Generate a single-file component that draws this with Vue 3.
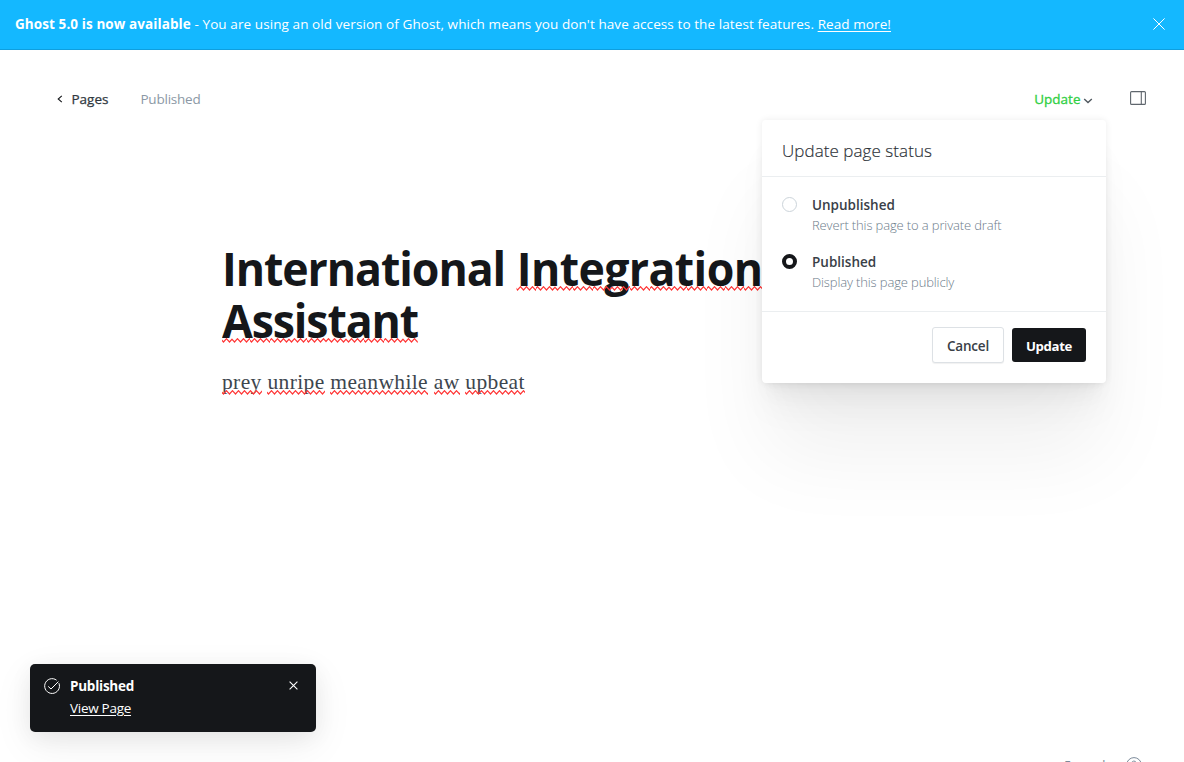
<script setup>
const words = ['prey', 'unripe', 'meanwhile', 'aw', 'upbeat']
</script>

<template>
  <div class="app">
    <header class="banner">
      <p class="banner-text"><strong>Ghost 5.0 is now available</strong> - You are using an old version of Ghost, which means you don't have access to the latest features. <a class="more">Read more!</a></p>
      <svg class="banner-close" width="12" height="12" viewBox="0 0 12 12"><path d="M.4.4 11.6 11.6M11.6.4.4 11.6" /></svg>
    </header>

    <nav class="toolbar">
      <svg class="back" width="6" height="8" viewBox="0 0 6 8"><path d="M4.8.8 1.2 4l3.6 3.2" /></svg>
      <span class="pages">Pages</span>
      <span class="state">Published</span>
      <span class="update">Update</span>
      <svg class="chev" width="10" height="6" viewBox="0 0 10 6"><path d="M1.2 1 5 4.5 8.8 1" /></svg>
      <svg class="panel" width="16" height="14" viewBox="0 0 16 14"><rect x=".6" y=".6" width="14.8" height="12.8" rx="1" /><path d="M11.3.6v12.8" /></svg>
    </nav>

    <main class="editor">
      <h1><span class="w1">International</span> <span class="sq w2">Integration</span><br><span class="sq w3">Assistant</span></h1>
      <p class="body"><template v-for="w in words" :key="w"><span class="sq">{{ w }}</span>{{ ' ' }}</template></p>
    </main>

    <section class="menu">
      <h2>Update page status</h2>
      <div class="options">
        <div class="option">
          <i class="radio"></i>
          <div><b>Unpublished</b><small>Revert this page to a private draft</small></div>
        </div>
        <div class="option">
          <i class="radio on"></i>
          <div><b>Published</b><small>Display this page publicly</small></div>
        </div>
      </div>
      <footer>
        <button class="cancel">Cancel</button>
        <button class="primary">Update</button>
      </footer>
    </section>

    <aside class="toast">
      <svg class="check" width="16" height="16" viewBox="0 0 16 16"><path d="M14.9 5.2A7.4 7.4 0 1 1 12.6 2.2M4.2 8.4l2.8 2.6 7.4-7.4" /></svg>
      <div class="toast-text"><b>Published</b><a>View Page</a></div>
      <svg class="toast-close" width="9" height="9" viewBox="0 0 9 9"><path d="M.6.6 8.4 8.4M8.4.6.6 8.4" /></svg>
    </aside>

    <div class="status"><span>5 words</span><svg width="16" height="16" viewBox="0 0 16 16"><circle cx="8" cy="8" r="7.4" /><path d="M5.8 6.2a2.2 2.2 0 1 1 3.2 2c-.7.4-1 .7-1 1.4M8 11.4v1" /></svg></div>
  </div>
</template>

<style>
body { margin: 0; background: #fff; }
</style>

<style scoped>
.app { position: relative; width: 1184px; height: 762px; overflow: hidden; background: #fff; color: #15171a; font-family: "Segoe UI", "Open Sans", "Noto Sans", sans-serif; font-size: 13.5px; }
svg { display: block; fill: none; flex: none; }
p, h1, h2 { margin: 0; }
.banner { box-sizing: border-box; height: 50px; padding: 0 19px 2px 15px; display: flex; align-items: center; justify-content: space-between; background: #14b8ff; border-bottom: 1px solid #0f9fde; color: #fff; }
.banner-text { white-space: nowrap; letter-spacing: .09px; }
.banner-text strong { font-weight: 700; }
.more { text-decoration: underline; text-underline-offset: 2px; }
.banner-close { stroke: #fff; stroke-width: 1; }
.toolbar { height: 98px; box-sizing: border-box; padding: 0 38px 0 57px; display: flex; align-items: center; }
.back { stroke: #15171a; stroke-width: 1.1; }
.pages { margin-left: 8.5px; color: #303840; -webkit-text-stroke: .25px #303840; }
.state { margin-left: 32px; color: #8b98a5; letter-spacing: -.22px; }
.update { margin-left: auto; color: #30cf43; -webkit-text-stroke: .3px #30cf43; }
.chev { margin: 4px 37px 0 2.5px; stroke: #50585f; stroke-width: 1.4; }
.panel { stroke: #5f666d; stroke-width: 1.1; margin-top: -2px; }
.editor { padding: 94px 0 0 222px; }
h1 { width: 640px; font-size: 47px; line-height: 52px; font-weight: 700; white-space: nowrap; transform: scaleX(.95); transform-origin: 0 0; }
.w1 { letter-spacing: -1.13px; }
.w2 { letter-spacing: -.64px; }
.w3 { letter-spacing: -1.18px; }
.body { margin-top: 20px; font-family: Georgia, "Liberation Serif", serif; font-size: 21.5px; line-height: 32px; letter-spacing: .37px; color: #3d464e; }
.sq { position: relative; display: inline-block; }
.sq::after { content: ""; position: absolute; left: 0; right: 0; bottom: 3px; height: 5px; background: url("data:image/svg+xml,%3Csvg xmlns='http://www.w3.org/2000/svg' width='6' height='5'%3E%3Cpath d='M-1.5 .7 1.5 4 4.5 .7 7.5 4' fill='none' stroke='%23f33' stroke-width='1.2'/%3E%3C/svg%3E") repeat-x; }
.menu { position: absolute; left: 762px; top: 120px; width: 344px; height: 263px; background: #fff; border-radius: 4px; box-shadow: 0 0 7px rgba(0,0,0,.08), 0 5.1px 5.3px -5px rgba(0,0,0,.02), 0 9.5px 10px -5px rgba(0,0,0,.025), 0 17px 17.9px -5px rgba(0,0,0,.03), 0 31.8px 33.4px -5px rgba(0,0,0,.04), 0 76px 80px -5px rgba(0,0,0,.06); }
h2 { box-sizing: border-box; height: 57px; padding: 4px 20px 0; display: flex; align-items: center; border-bottom: 1px solid #ebeef0; font-weight: 300; font-size: 17px; letter-spacing: .06px; color: #2b3036; -webkit-text-stroke: .15px #2b3036; }
.options { height: 135px; box-sizing: border-box; padding: 18px 20px 0; border-bottom: 1px solid #ebeef0; }
.option { display: flex; height: 57px; }
.option b, .option small { display: block; width: max-content; line-height: 20px; }
.option b { font-weight: 600; color: #394047; }
.option small { font-size: 13px; font-weight: 300; letter-spacing: -.13px; color: #6c7b8a; }
.radio { box-sizing: border-box; width: 15px; height: 15px; margin: 2px 15px 0 0; border: 1px solid #ccd4da; border-radius: 50%; }
.radio.on { border: 4px solid #15171a; }
footer { display: flex; justify-content: flex-end; gap: 8px; padding: 15px 20px 0; }
button { box-sizing: border-box; font: inherit; font-weight: 600; padding: 0; display: flex; align-items: center; justify-content: center; border-radius: 3px; letter-spacing: -.2px; }
.cancel { width: 72px; height: 36px; padding-top: 1px; background: #fff; border: 1px solid #dde1e5; color: #394047; box-shadow: 0 1px 1px rgba(0,0,0,.06); }
.primary { width: 74px; height: 34px; margin-top: 1px; padding-top: 2px; border: 0; background: #15171a; color: #fff; font-weight: 700; font-size: 13.2px; letter-spacing: -.35px; }
.toast { position: absolute; left: 30px; top: 664px; box-sizing: border-box; width: 286px; height: 68px; padding: 11px 18px 0 14px; display: flex; background: #15171a; color: #fff; border-radius: 5px; box-shadow: 0 0 1px rgba(0,0,0,.05), 0 5px 22px rgba(0,0,0,.06), 0 12px 40px rgba(0,0,0,.07); }
.check { stroke: #fff; stroke-width: 1; margin: 3px 10px 0 0; }
.toast-text b, .toast-text a { display: block; width: max-content; line-height: 22px; }
.toast-text b { font-weight: 700; letter-spacing: -.25px; }
.toast-text a { text-decoration: underline; text-underline-offset: 2px; letter-spacing: -.28px; }
.toast-close { stroke: #fff; stroke-width: 1.1; margin: 6px 0 0 auto; }
.status { position: absolute; left: 1064px; top: 757px; display: flex; gap: 15px; color: #7c8b9a; font-size: 13px; line-height: 16px; letter-spacing: -.1px; }
.status svg { stroke: #7c8b9a; }
</style>
